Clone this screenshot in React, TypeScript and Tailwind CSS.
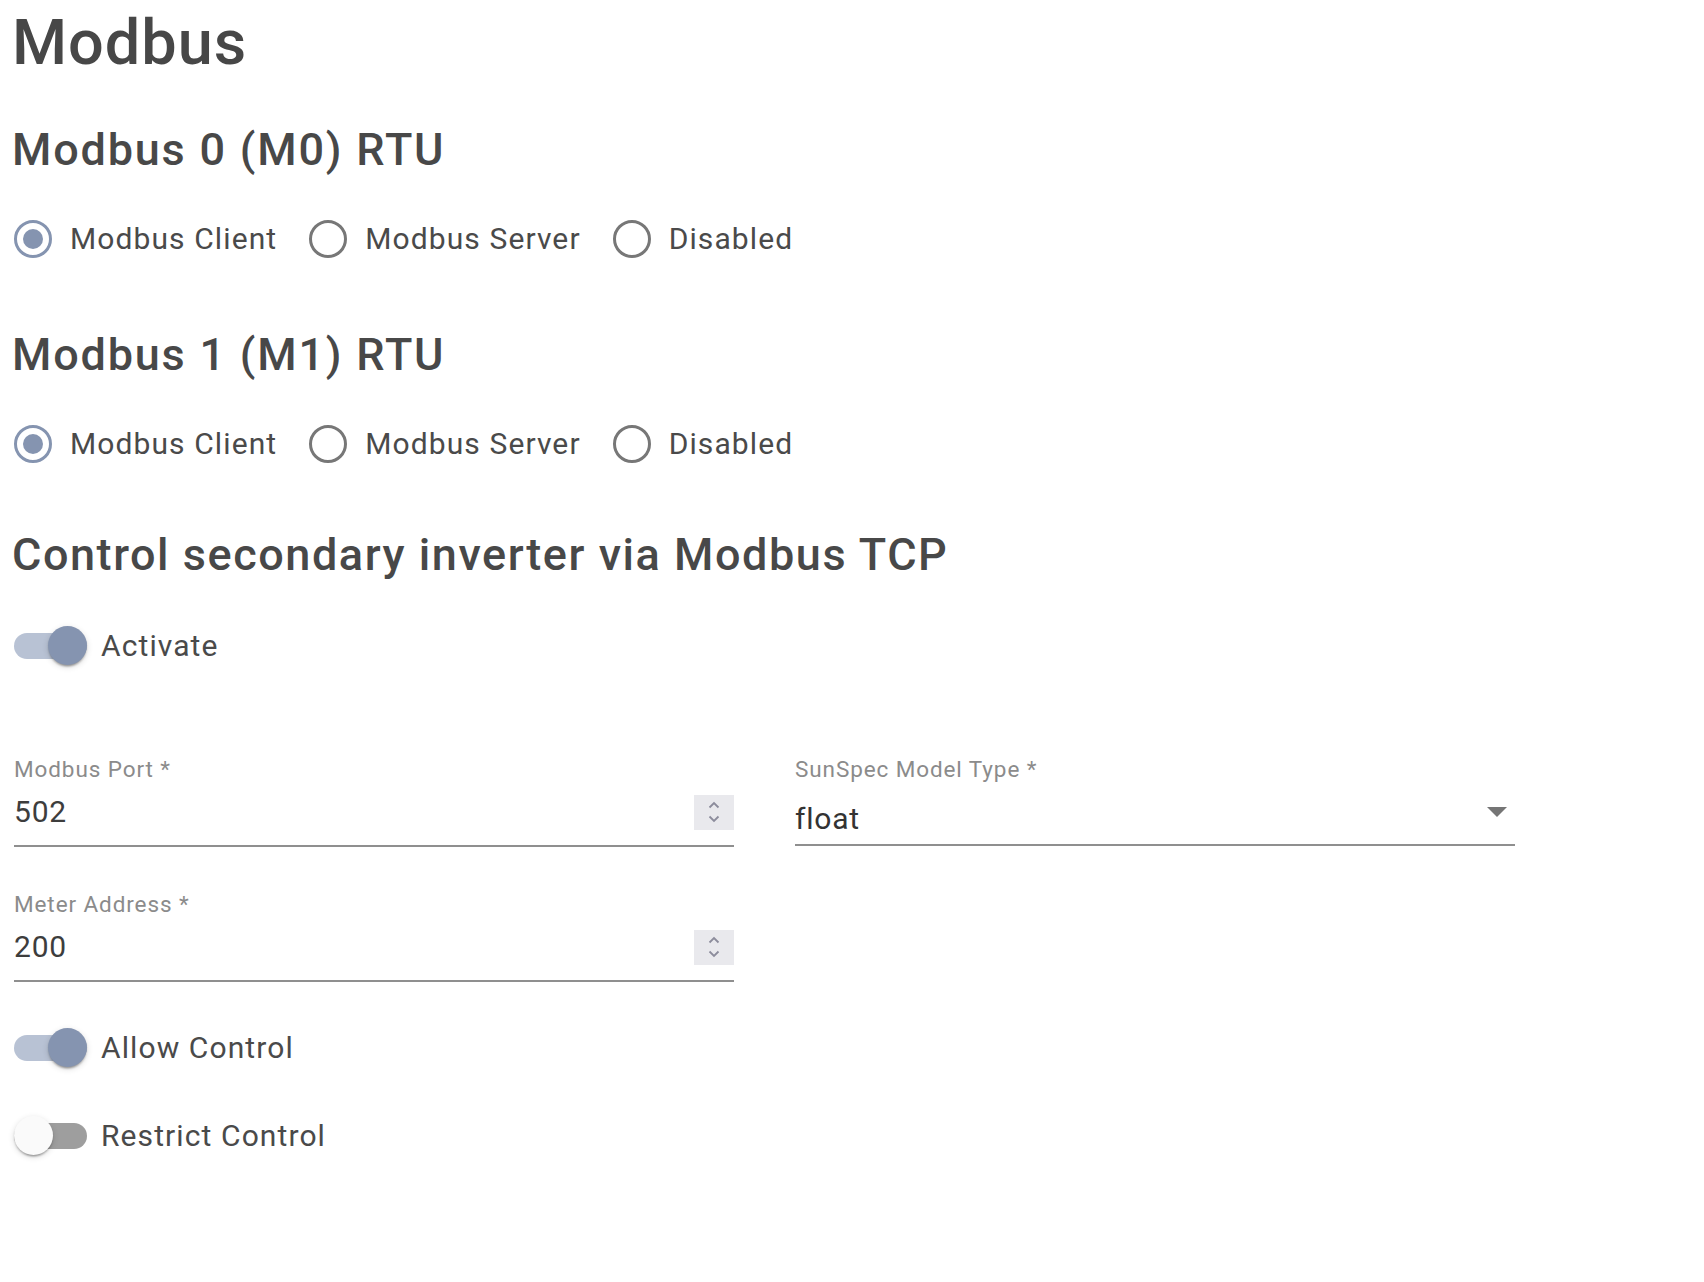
import React from "react";

// Modbus settings panel: two RTU radio groups, then the Modbus TCP block

function Radio({ checked = false }: { checked?: boolean }) {
  return (
    <span
      className={`flex h-[38px] w-[38px] shrink-0 items-center justify-center rounded-full border-[3.5px] ${
        checked ? "border-[#8594b0]" : "border-[#777777]"
      }`}
    >
      {checked && <span className="h-[20px] w-[20px] rounded-full bg-[#8594b0]" />}
    </span>
  );
}

function RadioRow({ value }: { value: string }) {
  const options = ["Modbus Client", "Modbus Server", "Disabled"];
  return (
    <div className="mt-[35px] flex h-[54px] items-center gap-[32px]">
      {options.map((o) => (
        <label key={o} className="flex items-center gap-[18px]">
          <Radio checked={o === value} />
          <span className="text-[30px] leading-[36px] tracking-[1.1px] text-[#4a4a4a]">{o}</span>
        </label>
      ))}
    </div>
  );
}

function Switch({ on = false }: { on?: boolean }) {
  return (
    <span className="relative flex h-[40px] w-[74px] shrink-0 items-center">
      <span className={`h-[26px] w-[73px] rounded-full ${on ? "bg-[#b8c2d4]" : "bg-[#9e9e9e]"}`} />
      <span
        className={`absolute top-[0px] h-[39px] w-[39px] rounded-full shadow-[0_3px_2px_-2px_rgba(0,0,0,0.25),0_2px_2px_0_rgba(0,0,0,0.14),0_2px_6px_0_rgba(0,0,0,0.14)] ${
          on ? "left-[34px] bg-[#8594b0]" : "left-[0px] bg-[#fafafa]"
        }`}
      />
    </span>
  );
}

function SwitchRow({ label, on, className = "" }: { label: string; on?: boolean; className?: string }) {
  return (
    <div className={`flex h-[54px] items-center gap-[13px] ${className}`}>
      <Switch on={on} />
      <span className="text-[30px] leading-[36px] tracking-[1.1px] text-[#4a4a4a]">{label}</span>
    </div>
  );
}

function Spinner() {
  return (
    <span className="flex h-[35px] w-[40px] items-center justify-center bg-[#e9e9ed]">
      <svg width="14" height="26" viewBox="0 0 14 26" fill="none" stroke="#8c8c9c" strokeWidth="1.8">
        <path d="M2.5 8.5 L7 4 L11.5 8.5" />
        <path d="M2.5 17.5 L7 22 L11.5 17.5" />
      </svg>
    </span>
  );
}

function NumberField({ label, value, className = "" }: { label: string; value: string; className?: string }) {
  return (
    <div className={`border-b-2 border-[#8f8f8f] pb-[15px] ${className}`}>
      <div className="h-[26px] text-[22.5px] leading-[26px] tracking-[0.9px] text-[#8b8b8b]">{label}</div>
      <div className="mt-[12px] flex h-[36px] items-center justify-between">
        <span className="text-[30px] leading-[36px] tracking-[0.8px] text-[#3d3d3d]">{value}</span>
        <Spinner />
      </div>
    </div>
  );
}

function SelectField({ label, value }: { label: string; value: string }) {
  return (
    <div className="border-b-2 border-[#8f8f8f] pb-[7px]">
      <div className="h-[26px] text-[22.5px] leading-[26px] tracking-[0.9px] text-[#8b8b8b]">{label}</div>
      <div className="mt-[19px] flex h-[36px] items-center justify-between pr-[8px]">
        <span className="text-[30px] leading-[36px] tracking-[0.8px] text-[#333333]">{value}</span>
        <svg width="20" height="10" viewBox="0 0 20 10" className="-mt-[14px]">
          <polygon points="0,0 20,0 10,10" fill="#757575" />
        </svg>
      </div>
    </div>
  );
}

export default function App() {
  return (
    <div className="min-h-[1282px] bg-white pl-[14px] pt-[5px] font-[Roboto,sans-serif]">
      <h1 className="-ml-[2px] h-[76px] text-[63px] font-medium leading-[76px] tracking-[1px] text-[#474747]">
        Modbus
      </h1>

      <h2 className="-ml-[2px] mt-[42px] h-[54px] text-[45px] font-medium leading-[54px] tracking-[1.8px] text-[#484848]">
        Modbus 0 (M0) RTU
      </h2>
      <RadioRow value="Modbus Client" />

      <h2 className="-ml-[2px] mt-[62px] h-[54px] text-[45px] font-medium leading-[54px] tracking-[1.8px] text-[#484848]">
        Modbus 1 (M1) RTU
      </h2>
      <RadioRow value="Modbus Client" />

      <h2 className="-ml-[2px] mt-[57px] h-[54px] text-[45px] font-medium leading-[54px] tracking-[1.55px] text-[#484848]">
        Control secondary inverter via Modbus TCP
      </h2>
      <SwitchRow label="Activate" on className="mt-[37px]" />

      <div className="mt-[83px] grid grid-cols-[720px_720px] items-start gap-x-[61px]">
        <NumberField label="Modbus Port *" value="502" />
        <SelectField label="SunSpec Model Type *" value="float" />
        <NumberField label="Meter Address *" value="200" className="mt-[44px]" />
      </div>

      <SwitchRow label="Allow Control" on className="mt-[39px]" />
      <SwitchRow label="Restrict Control" className="mt-[34px]" />
    </div>
  );
}
